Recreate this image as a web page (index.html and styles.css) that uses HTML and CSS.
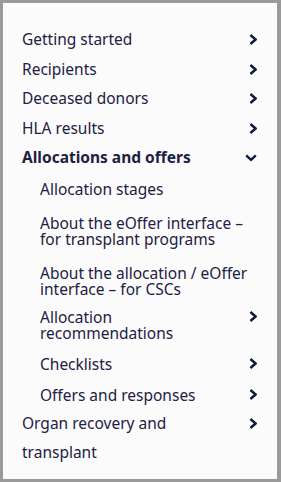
FILE: index.html
```html
<!DOCTYPE html>
<html lang="en">
<head>
  <meta charset="UTF-8">
  <meta name="viewport" content="width=device-width, initial-scale=1.0">
  <title>Allocations and offers</title>
  <link rel="stylesheet" href="styles.css">
</head>
<body>
  <nav class="side-nav">
    <ul class="nav-list">
      <li class="nav-item">
        <a href="#" class="nav-link">Getting started</a>
        <span class="chevron"><svg width="8" height="11" viewBox="0 0 8 11"><path d="M1.4 1 L6.6 5.5 L1.4 10"/></svg></span>
      </li>
      <li class="nav-item">
        <a href="#" class="nav-link">Recipients</a>
        <span class="chevron"><svg width="8" height="11" viewBox="0 0 8 11"><path d="M1.4 1 L6.6 5.5 L1.4 10"/></svg></span>
      </li>
      <li class="nav-item">
        <a href="#" class="nav-link">Deceased donors</a>
        <span class="chevron"><svg width="8" height="11" viewBox="0 0 8 11"><path d="M1.4 1 L6.6 5.5 L1.4 10"/></svg></span>
      </li>
      <li class="nav-item">
        <a href="#" class="nav-link">HLA results</a>
        <span class="chevron"><svg width="8" height="11" viewBox="0 0 8 11"><path d="M1.4 1 L6.6 5.5 L1.4 10"/></svg></span>
      </li>
      <li class="nav-item open">
        <a href="#" class="nav-link">Allocations and offers</a>
        <span class="chevron"><svg width="12" height="8" viewBox="0 0 12 8"><path d="M1.2 1.4 L6 5.9 L10.8 1.4"/></svg></span>
      </li>
      <li>
        <ul class="sub-list">
          <li class="sub-item leaf"><a href="#" class="nav-link">Allocation stages</a></li>
          <li class="sub-item leaf"><a href="#" class="nav-link">About the eOffer interface – for transplant programs</a></li>
          <li class="sub-item leaf"><a href="#" class="nav-link">About the allocation / eOffer interface – for CSCs</a></li>
          <li class="sub-item">
            <a href="#" class="nav-link">Allocation recommendations</a>
            <span class="chevron"><svg width="8" height="11" viewBox="0 0 8 11"><path d="M1.4 1 L6.6 5.5 L1.4 10"/></svg></span>
          </li>
          <li class="sub-item">
            <a href="#" class="nav-link">Checklists</a>
            <span class="chevron"><svg width="8" height="11" viewBox="0 0 8 11"><path d="M1.4 1 L6.6 5.5 L1.4 10"/></svg></span>
          </li>
          <li class="sub-item">
            <a href="#" class="nav-link">Offers and responses</a>
            <span class="chevron"><svg width="8" height="11" viewBox="0 0 8 11"><path d="M1.4 1 L6.6 5.5 L1.4 10"/></svg></span>
          </li>
        </ul>
      </li>
      <li class="nav-item">
        <a href="#" class="nav-link">Organ recovery and transplant</a>
        <span class="chevron"><svg width="8" height="11" viewBox="0 0 8 11"><path d="M1.4 1 L6.6 5.5 L1.4 10"/></svg></span>
      </li>
    </ul>
  </nav>
</body>
</html>
```

FILE: styles.css
```css
body {
  margin: 0;
  font-family: "Noto Sans", "Open Sans", sans-serif;
  font-size: 15.5px;
  color: #1d2142;
}
.side-nav {
  width: 281px;
  height: 482px;
  box-sizing: border-box;
  border: 3px solid #9a9a9a;
  border-right-width: 4px;
  background: #fbfbfc;
  padding: 22px 20px 0 19px;
}
ul {
  list-style: none;
  margin: 0;
  padding: 0;
}
.nav-link {
  color: inherit;
  text-decoration: none;
  flex: 1;
}
.nav-item {
  display: flex;
  align-items: flex-start;
  line-height: 29.5px;
}
.nav-item.open {
  font-weight: bold;
}
.chevron {
  width: 28px;
  height: 29.5px;
  display: flex;
  align-items: center;
  justify-content: flex-end;
}
.chevron svg {
  fill: none;
  stroke: #0f1a3c;
  stroke-width: 2.4;
}
.sub-list {
  padding-left: 18px;
}
.sub-item {
  display: flex;
  align-items: flex-start;
  line-height: 16px;
  padding: 5px 0 10px;
}
.sub-item .chevron {
  height: 16px;
}
.leaf + .sub-item:not(.leaf) {
  padding-top: 2px;
}
.sub-item:last-child {
  padding-bottom: 6px;
}
.sub-item.leaf {
  padding: 8px 0;
  margin-bottom: 2px;
}
```
